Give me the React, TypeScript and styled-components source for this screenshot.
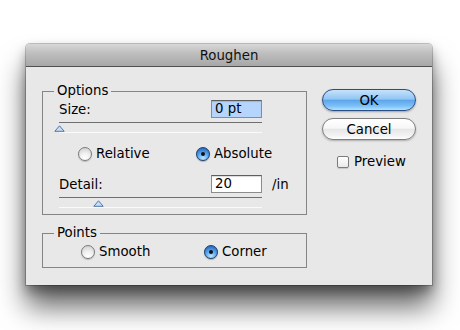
import React from "react";
import styled, { createGlobalStyle, css } from "styled-components";

const Global = createGlobalStyle`
  html, body { margin: 0; padding: 0; background: #ffffff; }
  body { font-family: "DejaVu Sans", "Liberation Sans", sans-serif; font-size: 13.3px; color: #000; }
`;

const Page = styled.div`
  width: 460px;
  height: 330px;
  padding: 44px 0 0 26px;
  box-sizing: border-box;
  overflow: hidden;
`;

const Window = styled.div`
  width: 406px;
  height: 241px;
  background: #e8e8e8;
  border-radius: 4px 4px 0 0;
  box-shadow: 0 22px 28px rgba(0, 0, 0, 0.6), 0 6px 12px rgba(0, 0, 0, 0.35), 0 0 0 1px rgba(0, 0, 0, 0.22);
  display: flex;
  flex-direction: column;
  overflow: hidden;
`;

const TitleBar = styled.div`
  height: 22px;
  flex: none;
  border-bottom: 1px solid #4f4f4f;
  background: linear-gradient(#d8d8d8, #bfbfbf 40%, #a7a7a7);
  display: flex;
  align-items: center;
  justify-content: center;
  font-size: 13.3px;
  color: #111;
`;

const Body = styled.div`
  flex: 1;
  display: flex;
  padding: 16px 0 0 16px;
  gap: 15px;
`;

const LeftCol = styled.div`
  width: 265px;
  display: flex;
  flex-direction: column;
  gap: 10px;
`;

const Group = styled.fieldset<{ $h: number }>`
  margin: 0;
  border: 1px solid #858585;
  padding: 0 0 0 16px;
  height: ${(p) => p.$h}px;
  box-sizing: border-box;
  display: flex;
  flex-direction: column;
`;

const Legend = styled.legend`
  margin-left: -5px;
  padding: 0 3px;
  line-height: 16px;
`;

const FieldRow = styled.div<{ $mt: number }>`
  display: flex;
  align-items: center;
  margin-top: ${(p) => p.$mt}px;
  height: 18px;
`;

const Field = styled.div`
  width: 203px;
  display: flex;
  align-items: center;
  justify-content: space-between;
`;

const Input = styled.div<{ $selected?: boolean }>`
  width: 51px;
  height: 18px;
  box-sizing: border-box;
  border: 1px solid #8c8c8c;
  border-top-color: #5e5e5e;
  box-shadow: inset 0 1px 1px rgba(0, 0, 0, 0.15);
  background: ${(p) => (p.$selected ? "#b5d5fd" : "#ffffff")};
  padding: 0 0 0 3px;
  line-height: 16px;
`;

const Unit = styled.span`
  margin-left: 10px;
`;

const Slider = styled.div`
  width: 203px;
  height: 9px;
  position: relative;
  margin-top: 4px;
  border-top: 1px solid #6f6f6f;
  box-shadow: 0 1px 0 #fafafa;
`;

const Thumb = styled.svg<{ $left: number }>`
  position: absolute;
  top: 2px;
  left: ${(p) => p.$left}px;
`;

const RadioRow = styled.div<{ $mt: number; $pl: number }>`
  display: flex;
  align-items: center;
  margin-top: ${(p) => p.$mt}px;
  padding-left: ${(p) => p.$pl}px;
`;

const RadioItem = styled.label<{ $w?: number }>`
  display: flex;
  align-items: center;
  gap: 4px;
  ${(p) => p.$w && css`width: ${p.$w}px;`}
`;

const RadioDot = styled.span<{ $on?: boolean }>`
  width: 14px;
  height: 14px;
  border-radius: 50%;
  box-sizing: border-box;
  position: relative;
  flex: none;
  ${(p) =>
    p.$on
      ? css`
          border: 1px solid #23466f;
          background: radial-gradient(circle at 50% 85%, #bfe6ff 0%, #5aa6ef 45%, #2f6fc2 80%),
            #4a8fdc;
          box-shadow: 0 1px 1px rgba(0, 0, 0, 0.25);
          &::after {
            content: "";
            position: absolute;
            left: 4px;
            top: 4px;
            width: 4px;
            height: 4px;
            border-radius: 50%;
            background: #111;
          }
        `
      : css`
          border: 1px solid #7b7b7b;
          background: radial-gradient(circle at 50% 85%, #ffffff 0%, #f1f1f1 40%, #c9c9c9 100%);
          box-shadow: 0 1px 1px rgba(0, 0, 0, 0.2);
        `}
`;

const RightCol = styled.div`
  width: 94px;
  display: flex;
  flex-direction: column;
  align-items: stretch;
  padding-top: 6px;
`;

const Button = styled.div<{ $primary?: boolean; $mt: number }>`
  height: 22px;
  margin-top: ${(p) => p.$mt}px;
  border-radius: 11px;
  box-sizing: border-box;
  display: flex;
  align-items: center;
  justify-content: center;
  ${(p) =>
    p.$primary
      ? css`
          border: 1px solid #2b4d86;
          background: linear-gradient(#c6e2fb 0%, #92c6f4 45%, #5ea6ec 52%, #7cc0f7 80%, #b3e2ff 100%);
          box-shadow: 0 1px 2px rgba(0, 0, 0, 0.3);
        `
      : css`
          border: 1px solid #7e7e7e;
          background: linear-gradient(#ffffff 0%, #f7f7f7 45%, #e7e7e7 52%, #f4f4f4 85%, #ffffff 100%);
          box-shadow: 0 1px 2px rgba(0, 0, 0, 0.25);
        `}
`;

const CheckRow = styled.label`
  display: flex;
  align-items: center;
  gap: 5px;
  margin-top: 14px;
  padding-left: 15px;
`;

const CheckBox = styled.span`
  width: 12px;
  height: 12px;
  box-sizing: border-box;
  border: 1px solid #7c7c7c;
  border-radius: 2px;
  background: linear-gradient(#ffffff, #e9e9e9);
  box-shadow: 0 1px 1px rgba(0, 0, 0, 0.15);
`;

const ThumbIcon = ({ left }: { left: number }) => (
  <Thumb $left={left} width="11" height="7" viewBox="0 0 11 7">
    <path d="M5.5 0.8 L10.2 6.3 L0.8 6.3 Z" fill="#c9ddf3" stroke="#4d77b0" strokeWidth="1" strokeLinejoin="round" />
  </Thumb>
);

export default function App() {
  return (
    <>
      <Global />
      <Page>
        <Window>
          <TitleBar>Roughen</TitleBar>
          <Body>
            <LeftCol>
              <Group $h={132}>
                <Legend>Options</Legend>
                <FieldRow $mt={1}>
                  <Field>
                    <span>Size:</span>
                    <Input $selected>0 pt</Input>
                  </Field>
                </FieldRow>
                <Slider>
                  <ThumbIcon left={-5} />
                </Slider>
                <RadioRow $mt={14} $pl={19}>
                  <RadioItem $w={118}>
                    <RadioDot />
                    Relative
                  </RadioItem>
                  <RadioItem>
                    <RadioDot $on />
                    Absolute
                  </RadioItem>
                </RadioRow>
                <FieldRow $mt={14}>
                  <Field>
                    <span>Detail:</span>
                    <Input>20</Input>
                  </Field>
                  <Unit>/in</Unit>
                </FieldRow>
                <Slider>
                  <ThumbIcon left={34} />
                </Slider>
              </Group>
              <Group $h={43}>
                <Legend>Points</Legend>
                <RadioRow $mt={3} $pl={22}>
                  <RadioItem $w={123}>
                    <RadioDot />
                    Smooth
                  </RadioItem>
                  <RadioItem>
                    <RadioDot $on />
                    Corner
                  </RadioItem>
                </RadioRow>
              </Group>
            </LeftCol>
            <RightCol>
              <Button $primary $mt={0}>OK</Button>
              <Button $mt={7}>Cancel</Button>
              <CheckRow>
                <CheckBox />
                Preview
              </CheckRow>
            </RightCol>
          </Body>
        </Window>
      </Page>
    </>
  );
}
